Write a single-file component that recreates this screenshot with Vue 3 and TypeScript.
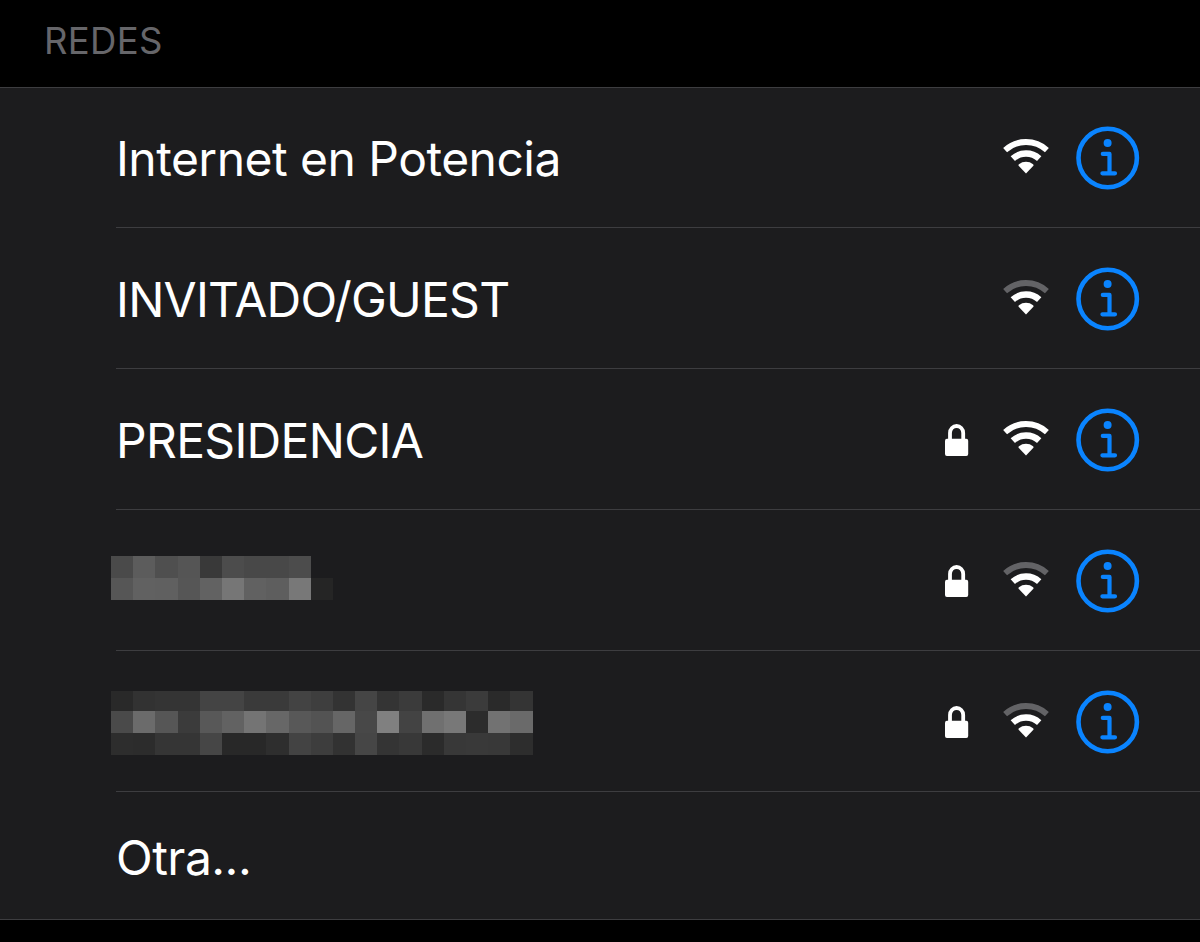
<script setup lang="ts">
interface Network {
  id: string
  name?: string
  mosaic?: string[]
  locked: boolean
  strong: boolean
}

const networks: Network[] = [
  { id: 'internet', name: 'Internet en Potencia', locked: false, strong: true },
  { id: 'guest', name: 'INVITADO/GUEST', locked: false, strong: false },
  { id: 'presidencia', name: 'PRESIDENCIA', locked: true, strong: true },
  {
    id: 'hidden-short',
    mosaic: ['4a5c4f55394c48484c', '566160566276615e7825'],
    locked: true,
    strong: false,
  },
  {
    id: 'hidden-long',
    mosaic: [
      '2932343444443a3a433e3345343b2a353b2a34',
      '4a6b563b5862746758536648804370782c726a',
      '2d2c35354628282e433d324634382b3839382d',
    ],
    locked: true,
    strong: false,
  },
]

function shades(row: string): string[] {
  return (row.match(/../g) ?? []).map((v) => `#${v}${v}${v}`)
}
</script>

<template>
  <main class="screen">
    <h2 class="heading">REDES</h2>
    <ul class="list">
      <li v-for="n in networks" :key="n.id" class="row" :class="n.id">
        <div class="content">
          <span v-if="n.name" class="name">{{ n.name }}</span>
          <div v-else class="mosaic">
            <div v-for="(line, i) in n.mosaic" :key="i" class="mosaic-line">
              <i v-for="(c, j) in shades(line)" :key="j" class="cell" :style="{ background: c }"></i>
            </div>
          </div>
          <div class="icons">
            <svg v-if="n.locked" class="lock" viewBox="0 0 24 34" width="24" height="34">
              <path d="M5 17V9.9a6.6 6.9 0 0 1 13.2 0V17" fill="none" stroke="#fff" stroke-width="3.8" />
              <rect x="0" y="15.8" width="23.2" height="17.2" rx="1.9" fill="#fff" />
            </svg>
            <svg class="wifi" viewBox="-24 -35 48 36" width="48" height="36">
              <g fill="none" stroke="#fff">
                <path d="M-20.9 -22.9A31 31 0 0 1 20.9 -22.9" stroke-width="5.8" :class="{ dim: !n.strong }" />
                <path d="M-13.2 -14.3A19.5 19.5 0 0 1 13.2 -14.3" stroke-width="6.4" />
              </g>
              <path d="M0 .6L-7.4 -7.2Q-7.8 -8 -7.1 -8.8A11.6 11.6 0 0 1 7.1 -8.8Q7.8 -8 7.4 -7.2Z" fill="#fff" />
            </svg>
            <svg class="info" viewBox="0 0 64 64" width="64" height="64">
              <g fill="none" stroke="#0a84ff" stroke-linecap="round" stroke-linejoin="round">
                <circle cx="31.7" cy="32" r="29.2" stroke-width="4.6" />
                <path d="M26.8 27.9H33.5V47.3M26.4 47.3H39" stroke-width="4.2" />
              </g>
              <circle cx="31.6" cy="16.9" r="4" fill="#0a84ff" />
            </svg>
          </div>
        </div>
      </li>
      <li class="row other">
        <div class="content"><span class="name">Otra...</span></div>
      </li>
    </ul>
  </main>
</template>

<style>
body {
  margin: 0;
  background: #000;
}
</style>

<style scoped>
.screen {
  height: 942px;
  overflow: hidden;
  background: #000;
  color: #fff;
  font-family: Inter, 'Liberation Sans', sans-serif;
}
.heading {
  box-sizing: border-box;
  height: 87px;
  margin: 0;
  padding: 19px 0 0 44px;
  font-size: 36.5px;
  font-weight: 400;
  line-height: 44px;
  letter-spacing: 0.3px;
  color: #66666a;
}
.list {
  margin: 0;
  padding: 0;
  list-style: none;
  background: #1c1c1e;
  border-top: 1px solid #3d3d40;
  border-bottom: 1px solid #3d3d40;
}
.row {
  padding-left: 116px;
}
.content {
  box-sizing: border-box;
  display: flex;
  align-items: center;
  justify-content: space-between;
  height: 141px;
  padding: 2px 60px 0 0;
  border-bottom: 1px solid #3d3d40;
}
.row:first-child .content {
  height: 140px;
  padding-top: 1px;
}
.other .content {
  height: 127px;
  padding-top: 2px;
  border-bottom: 0;
}
.name {
  padding-top: 2px;
  font-size: 48px;
  line-height: 58px;
  letter-spacing: -0.53px;
  white-space: nowrap;
}
.guest .name {
  letter-spacing: -0.76px;
}
.presidencia .name {
  letter-spacing: -0.7px;
}
.icons {
  display: flex;
  align-items: center;
}
.lock {
  margin-right: 33px;
}
.wifi {
  margin-right: 26px;
  margin-bottom: 3.4px;
}
.dim {
  stroke: #636366;
}
.mosaic {
  margin: 0 0 7px -5px;
}
.mosaic-line {
  display: flex;
  height: 22px;
}
.cell {
  width: 22.2px;
}
.hidden-long .mosaic {
  margin: 2px 0 0 -5px;
}
.hidden-long .mosaic-line:first-child {
  height: 20px;
}
</style>
